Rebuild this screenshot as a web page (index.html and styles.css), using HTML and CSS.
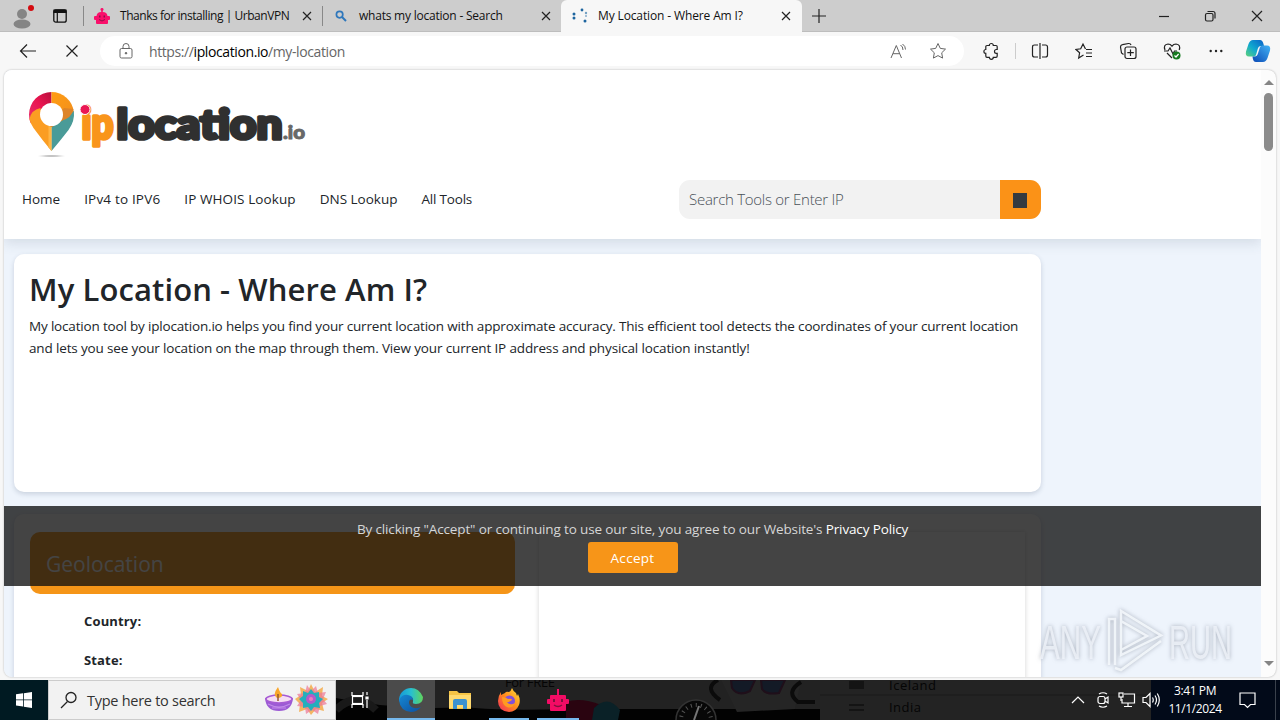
FILE: index.html
```html
<!DOCTYPE html>
<html lang="en">
<head>
  <meta charset="UTF-8">
  <title>My Location - Where Am I?</title>
  <link rel="stylesheet" href="styles.css">
</head>
<body>

  <div class="tab-strip">
    <div class="profile">
      <svg width="24" height="28" viewBox="0 0 24 28"><circle cx="12" cy="12" r="5" fill="#858585"/><ellipse cx="12" cy="22" rx="8.5" ry="4.5" fill="#858585"/><circle cx="21" cy="6" r="3" fill="#d40b10"/></svg>
    </div>
    <div class="workspaces">
      <svg width="16" height="16" viewBox="0 0 16 16"><rect x="1.8" y="1.8" width="12.4" height="12.4" rx="2" fill="none" stroke="#111" stroke-width="1.3"/><path d="M2 2h12v2.500H2zM5.3 5v9" fill="#111" stroke="#111" stroke-width="1.2"/></svg>
    </div>
    <div class="tab tab-first">
      <svg class="tab-icon" width="16" height="16" viewBox="0 0 16 16"><path d="M8 0a1.500 1.500 0 0 1 .8 2.800V4Q13 4 13.500 8H15q1 0 1 1v2q0 1-1 1h-1v3q0 1-1 1H3q-1 0-1-1v-3H1q-1 0-1-1V9q0-1 1-1h1.500Q3 4 7.200 4V2.800A1.500 1.500 0 0 1 8 0z" fill="#f9106b"/><path d="M5 7.500h1.500v2H5zM9.500 7.500H11v2H9.500z" fill="#8e1048"/><path d="M5 11.500q3 3 6 0" fill="none" stroke="#8e1048"/></svg>
      <span class="tab-title title-vpn">Thanks for installing | UrbanVPN</span>
      <svg class="close" width="10" height="10" viewBox="0 0 10 10"><path d="M1 1l8 8M9 1L1 9"/></svg>
    </div>
    <div class="tab tab-second">
      <svg class="tab-icon" width="12" height="12" viewBox="0 0 12 12"><circle cx="4.600" cy="4.600" r="3.200" fill="none" stroke="#2e77bc" stroke-width="1.700"/><path d="M7 7l4 4" stroke="#2e77bc" stroke-width="2"/></svg>
      <span class="tab-title title-search">whats my location - Search</span>
      <svg class="close" width="10" height="10" viewBox="0 0 10 10"><path d="M1 1l8 8M9 1L1 9"/></svg>
    </div>
    <div class="tab tab-active">
      <svg class="tab-icon" width="16" height="16" viewBox="0 0 16 16" fill="#1d659f"><circle cx="2" cy="6" r="1.500"/><circle cx="2" cy="10" r="1.500"/><circle cx="10" cy="2" r="1.400"/><circle cx="14" cy="5" r="1.200" opacity=".6"/><circle cx="14" cy="8" r="1" opacity=".5"/><circle cx="13" cy="13" r="1.500"/></svg>
      <span class="tab-title title-location">My Location - Where Am I?</span>
      <svg class="close" width="10" height="10" viewBox="0 0 10 10"><path d="M1 1l8 8M9 1L1 9"/></svg>
    </div>
    <svg class="new-tab" width="14" height="14" viewBox="0 0 14 14"><path d="M7 0v14M0 7h14"/></svg>
    <div class="window-buttons">
      <svg width="10" height="12" viewBox="0 0 10 12"><path d="M0 6.500h10"/></svg>
      <svg width="12" height="12" viewBox="0 0 12 12"><rect x="1.500" y="3.500" width="7.500" height="7.500" rx="1.500"/><path d="M3.500 1.500H9q2 0 2 2v5"/></svg>
      <svg width="12" height="12" viewBox="0 0 12 12"><path d="M1 1l10 10M11 1L1 11"/></svg>
    </div>
  </div>

  <div class="toolbar">
    <svg class="back" width="18" height="16" viewBox="0 0 18 16"><path d="M17 8H1.500M8 1.500L1.500 8L8 14.500"/></svg>
    <svg class="stop" width="14" height="14" viewBox="0 0 14 14"><path d="M1.500 1.500l11 11M12.500 1.500l-11 11"/></svg>
    <div class="address">
      <svg class="lock" width="14" height="16" viewBox="0 0 14 16"><rect x="1" y="5.500" width="12" height="9.500" rx="1.500"/><path d="M4 5.500V3.500a3 3 0 0 1 6 0v2"/><circle cx="7" cy="10.200" r=".8" fill="#555"/></svg>
      <span class="url">https://<b>iplocation.io</b>/my-location</span>
      <svg class="read" width="17" height="16" viewBox="0 0 17 16"><path d="M1 15L6.300 2.500L11.500 15M3 10.700h6.700M10.500 2q2.500 1.500 2.500 5M12.500 1q3 2 3 5.500"/></svg>
      <svg class="star" width="18" height="18" viewBox="0 0 18 18"><path d="M9 1.500l2.300 4.900 5.200.7-3.800 3.700.9 5.300L9 13.600l-4.600 2.500.9-5.300L1.500 7.100l5.200-.7z"/></svg>
    </div>
    <div class="toolbar-icons">
      <svg width="18" height="18" viewBox="0 0 18 18"><path d="M5 3.500h2.300a2 2 0 0 1 4 0H14q1.200 0 1.200 1.200v2.800h-.8a1.900 1.900 0 0 0 0 3.800h.8V14q0 1.300-1.200 1.300h-2.700a2 2 0 0 1-4 0H5q-1.200 0-1.200-1.300v-2.700a1.900 1.900 0 0 1 0-3.800V4.700Q3.800 3.500 5 3.500z"/></svg>
      <span class="divider"></span>
      <svg class="split" width="18" height="18" viewBox="0 0 18 18"><path d="M7 3H3.500Q1.500 3 1.500 5v8q0 2 2 2H7M11 3h3.500q2 0 2 2v8q0 2-2 2H11M9 1v16"/></svg>
      <svg class="favorites" width="18" height="18" viewBox="0 0 18 18"><path d="M10.500 7L8 2L5.700 6.800L1 7.500l3.600 3.300-.9 5.200L8.500 13M11 7.500h6M11 11h6M11 14.500h6"/></svg>
      <svg class="collections" width="18" height="18" viewBox="0 0 18 18"><path d="M4.500 12.500L2.500 11L1.500 5q0-2 2-2.300l6-1.200q2-.2 2.500 1.500"/><rect x="6" y="5" width="11" height="11.500" rx="2"/><path d="M11.500 7.500v6.500M8.300 10.700h6.500"/></svg>
      <svg class="essentials" width="18" height="18" viewBox="0 0 18 18"><path d="M2 8Q0 2.500 5 2q2.500 0 4 2.200Q10.500 2 13 2q5 .5 3.200 6M1 9h4l2-3 3 6 1.500-3H14M4 11l5 5"/><circle cx="13.500" cy="13.500" r="4" fill="#177b20" stroke="none"/><path d="M11.500 13.500l1.500 1.500 2.600-3" stroke="#fff"/></svg>
      <svg class="more" width="16" height="16" viewBox="0 0 16 16"><g fill="#222" stroke="none"><circle cx="2.700" cy="8" r="1.200"/><circle cx="8" cy="8" r="1.200"/><circle cx="13.300" cy="8" r="1.200"/></g></svg>
      <svg class="copilot" width="26" height="24" viewBox="0 0 26 24">
        <defs>
          <linearGradient id="cp1" x1="0" y1="1" x2="1" y2="0"><stop offset="0" stop-color="#5fd27a"/><stop offset=".45" stop-color="#10a9cf"/><stop offset="1" stop-color="#0a5fc9"/></linearGradient>
          <linearGradient id="cp2" x1="0" y1="1" x2="1" y2="0"><stop offset="0" stop-color="#0b49b5"/><stop offset="1" stop-color="#41b2f5"/></linearGradient>
        </defs>
        <path d="M8 1h7q2.500 0 3.500 4l.5 2h-3q-2.500 0-3.300 3L11 16q-.7 1.500-2.500 1.500H4q-4 0-3-5L3.500 5Q5 1 8 1z" fill="url(#cp1)" stroke="none"/>
        <path d="M18 23h-7q-2.500 0-3.200-3.500L7.500 17.500h2.300q2.200 0 3.200-3.200L15 8q.8-1.500 2.500-1.500H22q4 0 3 5L22.500 19Q21 23 18 23z" fill="url(#cp2)" stroke="none"/>
      </svg>
    </div>
  </div>

  <div class="viewport">
    <div class="page">
      <header class="header">
        <svg class="logo" width="282" height="70" viewBox="0 0 282 70">
          <defs>
            <linearGradient id="pinRed" x1="0" y1="1" x2="1" y2="0"><stop offset="0" stop-color="#e8306c"/><stop offset=".55" stop-color="#e91550"/><stop offset="1" stop-color="#b8103c"/></linearGradient>
            <linearGradient id="pinGold" x1="0" y1="0" x2="1" y2="1"><stop offset="0" stop-color="#ff9d13"/><stop offset=".7" stop-color="#f5921b"/><stop offset="1" stop-color="#b9733a"/></linearGradient>
            <radialGradient id="pinShade"><stop offset="0" stop-color="#999"/><stop offset="1" stop-color="#fff"/></radialGradient>
          </defs>
          <path d="M25.500 4A22.500 22.500 0 0 0 3 26.500q0 5 1.500 8.500L14 22l11.500-7z" fill="url(#pinRed)"/>
          <path d="M25.500 4A22.500 22.500 0 0 1 47.800 24L35 38l-9.500-23z" fill="url(#pinGold)"/>
          <path d="M3.500 31Q5 22 14.500 20l1 10 10 8v25Q17 53 7.500 40Q4 35 3.500 31z" fill="#fb9d22"/>
          <path d="M47.900 23Q49 33 42.500 42Q34 53 25.500 63V38l10-5z" fill="#4a9b98"/>
          <path d="M25.500 38v25l-3-3.500V38z" fill="#ffb545"/>
          <path d="M47.500 21Q46 30 35 33l-9 6-5-2 17-17z" fill="#dd8429"/>
          <circle cx="25.500" cy="26.500" r="11.500" fill="#fff"/>
          <ellipse cx="25.500" cy="68" rx="15" ry="1.200" fill="url(#pinShade)"/>
          <g class="logo-text">
            <text class="logo-ip" x="55.500" y="50.500" textLength="32" lengthAdjust="spacingAndGlyphs">ip</text>
            <text class="logo-name" x="90.500" y="50.500" textLength="166" lengthAdjust="spacingAndGlyphs">location</text>
            <text class="logo-io" x="257" y="51" textLength="22" lengthAdjust="spacingAndGlyphs">.io</text>
          </g>
          <circle cx="59" cy="21.500" r="5" fill="#ea1753" stroke="#fff"/>
        </svg>
        <div class="nav-row">
          <nav class="nav">
            <a>Home</a>
            <a class="nav-wide">IPv4 to IPV6</a>
            <a>IP WHOIS Lookup</a>
            <a>DNS Lookup</a>
            <a class="nav-last">All Tools</a>
          </nav>
          <div class="search">
            <span class="search-field">Search Tools or Enter IP</span>
            <span class="search-button"><i></i></span>
          </div>
        </div>
      </header>

      <main class="content">
        <section class="card intro">
          <h1>My Location - Where Am I?</h1>
          <p><span class="line-one">My location tool by iplocation.io helps you find your current location with approximate accuracy. This efficient tool detects the coordinates of your current location</span><br><span class="line-two">and lets you see your location on the map through them. View your current IP address and physical location instantly!</span></p>
        </section>
        <section class="card details">
          <div class="geo">
            <h2>Geolocation</h2>
            <div class="row">Country:</div>
            <div class="row">State:</div>
          </div>
          <div class="map"></div>
        </section>
      </main>

      <div class="cookie-bar">
        <p>By clicking "Accept" or continuing to use our site, you agree to our Website's <a>Privacy Policy</a></p>
        <button>Accept</button>
      </div>
    </div>
    <div class="scrollbar">
      <span class="arrow-up"></span>
      <span class="thumb"></span>
      <span class="arrow-down"></span>
    </div>
  </div>

  <svg class="watermark" width="204" height="68" viewBox="0 0 204 68">
    <g class="wm-text">
      <text x="5" y="53" textLength="61" lengthAdjust="spacingAndGlyphs">ANY</text>
      <text x="134" y="53" textLength="63" lengthAdjust="spacingAndGlyphs">RUN</text>
    </g>
    <path class="wm-mark" d="M74 59V13h6v46M86 5v44L126 29.500L86 5v10l26 15-26 14M80 62l6 2 40-29"/>
  </svg>

  <div class="taskbar">
    <svg class="backdrop" width="945" height="40" viewBox="0 0 945 40">
      <rect width="945" height="40" fill="#020202"/>
      <path d="M0 0h484v29H230Q160 31 130 27Q60 31 0 18z" fill="#222"/>
      <path d="M484 0h461v40H484z" fill="#232323"/>
      <path d="M0 30Q20 10 40 30" fill="none" stroke="#191919" stroke-width="8"/>
      <path d="M230 22q15-5 35 3l2 15h-37z" fill="#2a0410"/>
      <path d="M258 28q14-14 26 2l-2 10h-26z" fill="#0a2127"/>
      <circle cx="360" cy="40" r="20" fill="#080808" stroke="#333" stroke-width="1.500"/>
      <circle cx="360" cy="40" r="15" fill="none" stroke="#555" stroke-width="4" stroke-dasharray="1 4"/>
      <path d="M358 40l5-14" stroke="#777" stroke-width="2"/>
      <path d="M385 0h80l-6 29-58 3z" fill="#252525"/>
      <path d="M395 0h24l-5 11q-12 6-18-3zM425 0h24l-6 13q-13 2-17-4z" fill="#131a26" stroke="#1f0f1a" stroke-width="2"/>
      <path d="M382 0q-15 8 2 20M465 2q-16 10-3 20h17" fill="none" stroke="#0b0b0b" stroke-width="4"/>
      <path d="M484 15h350" stroke="#1a1a1a"/>
      <g class="ghost">
        <text x="169" y="7" textLength="50">For FREE</text>
        <text x="553" y="10" textLength="47">Iceland</text>
        <text x="553" y="32" textLength="32">India</text>
        <path d="M513 1h15v8h-15zM513 24h15v2h-15zM513 29h15v2h-15z" opacity=".5"/>
      </g>
    </svg>
    <div class="start">
      <svg width="16" height="16" viewBox="0 0 16 16" fill="#fff"><path d="M0 2.300L7 1.300V7.500H0zM7.800 1.200L16 0v7.500H7.800zM0 8.300h7v6.300l-7-1zM7.800 8.300H16V16l-8.200-1.200z"/></svg>
    </div>
    <div class="task-search">
      <svg class="magnifier" width="18" height="18" viewBox="0 0 18 18"><circle cx="11" cy="6.500" r="5"/><path d="M7.500 10.500L1 17"/></svg>
      <span>Type here to search</span>
      <svg class="diya" width="64" height="34" viewBox="0 0 64 34">
        <path d="M1 15q14-5 28 0-1 13-14 13T1 15z" fill="#9c5bd4"/>
        <ellipse cx="15" cy="16" rx="13" ry="4" fill="#f6ddf3" stroke="#a75bd4" stroke-width="1.500"/>
        <path d="M4 21q11 6 22 0M8 25h14" fill="none" stroke="#c48bea" stroke-width="1.200"/>
        <path d="M14 4q-6 8-1 11 6 0 5-4-2-1-4-7z" fill="#f9a62b"/>
        <path d="M14 11v7" stroke="#93572f" stroke-width="1.500"/>
        <g class="rangoli">
          <path d="M47 1l4 8 8-5-1 9 6 3-6 4 2 8-8-2-5 6-4-6-8 3 1-8-5-5 6-4-1-8 8 4z" fill="#f4b562"/>
          <path d="M43 2l4 6 5-5 2 7 8-1-3 7 4 5-7 2-2 8-6-4-6 4-1-7-8-1 4-6-4-6 8-1z" fill="#ed7695" opacity=".7"/>
          <path d="M47 6l3 4 5-1v5l4 2-4 4 1 5-6-1-3 4-3-4-5 1v-5l-4-4 4-3v-5l5 2z" fill="#24aebc"/>
          <circle cx="47" cy="16" r="5" fill="#b55ac9"/><circle cx="47" cy="16" r="2" fill="#ef7cbb"/>
        </g>
      </svg>
    </div>
    <div class="task-view">
      <svg width="18" height="16" viewBox="0 0 18 16" fill="none" stroke="#fff" stroke-width="1.200"><path d="M1 0v3.500h11V0M1 16v-3.500h11V16M16 0v3M16 8v8"/><rect x="1.500" y="4.500" width="10" height="7"/><path d="M15 5h2v2h-2z" fill="#fff"/></svg>
    </div>
    <div class="task edge">
      <svg width="26" height="26" viewBox="0 0 26 26">
        <defs>
          <linearGradient id="edgeTop" x1="0" y1=".5" x2="1" y2=".5"><stop offset="0" stop-color="#1598d7"/><stop offset=".5" stop-color="#28bfd1"/><stop offset="1" stop-color="#60d55c"/></linearGradient>
          <linearGradient id="edgeLow" x1="0" y1="0" x2="1" y2="1"><stop offset="0" stop-color="#1688d2"/><stop offset="1" stop-color="#0d4f9f"/></linearGradient>
        </defs>
        <path d="M1 12C2 5 7 1 13 1q8 0 12 9 0 7-7 7-4 0-3-2.500Q16 10 11 9 4 8 1 15z" fill="url(#edgeTop)"/>
        <path d="M1 13q3-6 9-5 5 1 5 5-4-2-4 3 1 6 9 5l3-1q-4 5-10 5Q2 24 1 13z" fill="url(#edgeLow)"/>
      </svg>
    </div>
    <div class="task explorer">
      <svg width="22" height="20" viewBox="0 0 22 20"><path d="M0 1h8l2 2h12v16H0z" fill="#f6c445"/><path d="M0 5h22v13H0z" fill="#ffda70"/><path d="M4 19v-8q0-2 2-2h10q2 0 2 2v8h-4v-4H8v4z" fill="#3b91cf"/></svg>
    </div>
    <div class="task firefox">
      <svg width="24" height="24" viewBox="0 0 24 24">
        <defs><linearGradient id="fire" x1="1" y1="0" x2="0" y2="1"><stop offset="0" stop-color="#ffe33c"/><stop offset=".5" stop-color="#ff8a1c"/><stop offset="1" stop-color="#f32663"/></linearGradient></defs>
        <path d="M15 0q1 3 4 5l1 3 1-2q3 6 1 11-3 7-10 7Q1 23 1 13q0-5 3-9v3l4-2q1-2 4-1 2-1 3-4z" fill="url(#fire)"/>
        <circle cx="12.500" cy="13" r="5.500" fill="#8150da"/><path d="M5 9q4 0 6 2 4-1 4 1-2 2-5 2 3 4 8 1-3 6-8 4-5-2-5-10z" fill="#ff9b21"/>
      </svg>
    </div>
    <div class="task robot">
      <svg width="24" height="24" viewBox="0 0 24 24"><path d="M11 1h2v6h6q1 0 1 1v3h2q1 0 1 1v3q0 1-1 1h-2v6q0 1-1 1H5q-1 0-1-1v-6H2q-1 0-1-1v-3q0-1 1-1h2V8q0-1 1-1h6z" fill="#f30c65"/><path d="M7 11h2v3H7zM15 11h2v3h-2z" fill="#82113c"/><path d="M8 17q4 3 8 0" fill="none" stroke="#82113c" stroke-width="1.500"/></svg>
    </div>
    <div class="tray">
      <svg width="14" height="8" viewBox="0 0 14 8"><path d="M1 7l6-6 6 6"/></svg>
      <svg class="meet" width="14" height="16" viewBox="0 0 14 16"><rect x="2" y="4.500" width="7" height="7" rx="2"/><path d="M9 7l3-2v6l-3-2M3 2q4-2.500 8 0M3 14q4 2.500 8 0"/></svg>
      <svg class="network" width="18" height="16" viewBox="0 0 18 16"><path d="M6 2h10.500v9H4V7M10 11v3M6 14.500h8"/><rect x="1" y="1" width="4" height="4"/><path d="M3 5v4"/></svg>
      <svg class="volume" width="18" height="16" viewBox="0 0 18 16"><path d="M1 5.500h3l4-4v13l-4-4H1zM10.500 5.500q1.500 2.500 0 5M13 3.500q3 4.500 0 9M15.300 1.500q4 6.500 0 13"/></svg>
    </div>
    <div class="clock-area">
      <div class="clock"><span>3:41 PM</span><span>11/1/2024</span></div>
      <svg class="notice" width="18" height="17" viewBox="0 0 18 17"><path d="M1 1h15v11.500h-4.500L8.500 15.500 5.500 12.500H1z"/></svg>
    </div>
  </div>

</body>
</html>
```
FILE: styles.css
```css
* {
  box-sizing: border-box;
  margin: 0;
  padding: 0;
}

body {
  width: 1280px;
  height: 720px;
  overflow: hidden;
  position: relative;
  display: flex;
  flex-direction: column;
  background: #f7f7f7;
  font-family: "Open Sans", "Noto Sans", sans-serif;
  color: #212529;
}

svg {
  display: block;
  flex: none;
}

span, a, h1, h2, p {
  white-space: nowrap;
}

/* browser tabs */
.tab-strip {
  height: 32px;
  flex: none;
  display: flex;
  align-items: center;
  background: #cdcdcd;
  border-bottom: 1px solid #bdbdbd;
}

.profile {
  width: 48px;
  padding-left: 10px;
}

.workspaces {
  width: 35px;
  padding-left: 4px;
}

.tab {
  height: 31px;
  display: flex;
  align-items: center;
  position: relative;
  font-size: 12px;
  color: #111;
}

.tab-first {
  width: 239px;
  padding-left: 11px;
}

.tab-second {
  width: 239px;
  padding-left: 13px;
}

.tab-first::before,
.tab-second::before {
  content: "";
  position: absolute;
  left: 0;
  top: 6px;
  height: 20px;
  border-left: 1px solid #888;
}

.tab-active {
  width: 241px;
  height: 32px;
  padding-left: 11px;
  background: #f7f7f7;
  border-radius: 6px 6px 0 0;
  margin-bottom: -1px;
}

.tab-title {
  margin-left: 10px;
}

.tab-second .tab-title {
  margin-left: 12px;
}

.tab .close {
  position: absolute;
  right: 10px;
}

.tab-active .close {
  right: 11px;
}

.close, .new-tab, .window-buttons svg {
  fill: none;
  stroke: #222;
  stroke-width: 1.2;
}

.title-vpn { letter-spacing: -0.45px; }
.title-search { letter-spacing: -0.22px; }
.title-location { letter-spacing: -0.13px; }

.tab-active .tab-title {
  margin-bottom: 1px;
}

.new-tab {
  margin-left: 10px;
}

.window-buttons {
  margin-left: auto;
  margin-right: 17px;
  display: flex;
  gap: 35px;
}

/* address row */
.toolbar {
  height: 38px;
  flex: none;
  display: flex;
  align-items: center;
  padding-left: 19px;
}

.toolbar svg {
  fill: none;
  stroke: #222;
  stroke-width: 1.2;
}

.stop {
  margin-left: 28px;
}

.address {
  width: 864px;
  height: 30px;
  margin-left: 21px;
  padding: 0 17px 0 19px;
  border-radius: 15px;
  background: #fff;
  display: flex;
  align-items: center;
}

.toolbar .address svg {
  stroke: #666;
  stroke-width: 1;
}

.url {
  margin-left: 16px;
  font-size: 14px;
  letter-spacing: -0.4px;
  color: #666;
}

.url b {
  color: #000;
  font-weight: 400;
}

.read {
  margin-left: auto;
}

.star {
  margin-left: 22px;
}

.toolbar-icons {
  flex: 1;
  margin-left: 18px;
  display: flex;
  align-items: center;
}

.divider {
  height: 16px;
  margin-left: 15px;
  border-left: 1px solid #ccc;
}

.split { margin-left: 15px; }
.favorites { margin-left: 26px; }
.collections { margin-left: 26px; }
.essentials { margin-left: 26px; }
.more { margin-left: 27px; }
.copilot { margin-left: 21px; }

/* web page */
.viewport {
  width: 1272px;
  height: 607px;
  flex: none;
  margin-left: 4px;
  display: flex;
  overflow: hidden;
  border-radius: 8px;
  background: #fcfcfc;
  box-shadow: 0 0 2px #aaa;
}

.page {
  width: 1257px;
  position: relative;
  overflow: hidden;
  background: #eef4fc;
}

.header {
  height: 169px;
  padding: 18px 0 0 22px;
  position: relative;
  background: #fff;
  box-shadow: 0 4px 12px rgba(60, 80, 100, 0.15);
}

.logo-text {
  font-family: Lato, sans-serif;
  font-weight: 900;
  font-size: 41px;
  stroke-width: 3.6;
  stroke-linejoin: round;
}

.logo-ip { fill: #f9951b; stroke: #f9951b; font-size: 44px; }
.logo-name { fill: #303030; stroke: #303030; }
.logo-io { font-size: 19px; fill: #686868; stroke: #686868; stroke-width: 1; }

.nav-row {
  display: flex;
  align-items: center;
  margin: 22px 0 0 -4px;
}

.nav {
  width: 657px;
  display: flex;
  gap: 24px;
  padding-bottom: 2px;
  font-size: 13.5px;
  letter-spacing: 0;
}

.nav .nav-wide { letter-spacing: 0.18px; }
.nav a:nth-child(3) { letter-spacing: 0.1px; }
.nav .nav-last { letter-spacing: -0.2px; }

.search {
  width: 362px;
  height: 39px;
  display: flex;
  overflow: hidden;
  border-radius: 11px;
  background: #f2f2f2;
}

.search-field {
  flex: 1;
  padding-left: 10px;
  line-height: 39px;
  font-size: 15px;
  font-weight: 300;
  letter-spacing: -0.27px;
  color: #495057;
}

.search-button {
  width: 41px;
  background: #fb9217;
  display: flex;
  align-items: center;
  justify-content: center;
}

.search-button i {
  width: 14px;
  height: 15px;
  margin: 2px 1px 0 0;
  background: #343a40;
}

.content {
  padding: 15px 0 0 10px;
}

.card {
  width: 1027px;
  background: #fff;
  border-radius: 10px;
  box-shadow: 0 2px 5px rgba(50, 70, 100, 0.2);
}

.intro {
  height: 238px;
  padding: 13px 15px;
}

h1 {
  font-size: 31px;
  line-height: 44px;
  font-weight: 600;
  letter-spacing: 0.1px;
}

.intro p {
  margin-top: 4px;
  font-size: 13.5px;
  line-height: 22px;
}

.line-one { letter-spacing: -0.177px; }
.line-two { letter-spacing: -0.145px; }

.details {
  height: 300px;
  margin-top: 22px;
  padding: 18px 16px;
  display: flex;
  gap: 24px;
}

.geo {
  width: 485px;
}

.map {
  width: 486px;
  box-shadow: 0 0 5px rgba(0, 0, 0, 0.17);
}

h2 {
  height: 62px;
  margin-bottom: 8px;
  padding-left: 16px;
  border-radius: 10px;
  background: #f59518;
  color: #fff;
  font-size: 21px;
  line-height: 65px;
  font-weight: 400;
}

.row {
  height: 39px;
  padding-left: 54px;
  font-size: 13px;
  font-weight: 700;
  line-height: 39px;
  letter-spacing: 0.15px;
}

.cookie-bar {
  position: absolute;
  left: 0;
  bottom: 91px;
  width: 1257px;
  height: 80px;
  padding-top: 12px;
  display: flex;
  flex-direction: column;
  align-items: center;
  background: rgba(15, 15, 15, 0.78);
  color: #d6d6d6;
  font-size: 13.5px;
}

.cookie-bar p {
  line-height: 22px;
  letter-spacing: -0.14px;
}

.cookie-bar a {
  color: #fff;
}

.cookie-bar button {
  width: 90px;
  height: 31px;
  margin-top: 2px;
  border: none;
  border-radius: 3px;
  background: #f79518;
  color: #fff;
  font: inherit;
  letter-spacing: 0.3px;
}

.scrollbar {
  width: 15px;
  display: flex;
  flex-direction: column;
  align-items: center;
  padding: 10px 0 11px;
}

.arrow-up, .arrow-down {
  border-left: 5px solid transparent;
  border-right: 5px solid transparent;
}

.arrow-up { border-bottom: 5px solid #858585; }
.arrow-down { border-top: 5px solid #858585; margin-top: auto; }

.thumb {
  width: 9px;
  height: 58px;
  margin-top: 8px;
  border-radius: 5px;
  background: #8b8b8b;
}

.watermark {
  position: absolute;
  left: 1035px;
  top: 606px;
  filter: drop-shadow(0 0 2px rgba(70, 80, 100, 0.5));
}

.wm-text {
  font-family: "Liberation Sans", sans-serif;
  font-size: 49px;
  fill: rgba(240, 244, 250, 0.8);
}

.wm-mark {
  fill: none;
  stroke: rgba(246, 249, 253, 0.85);
  stroke-width: 2.5;
}

/* taskbar */
.taskbar {
  height: 40px;
  margin-top: 3px;
  flex: none;
  position: relative;
  display: flex;
  background: #222;
}

.taskbar > div {
  position: relative;
  display: flex;
  align-items: center;
  justify-content: center;
}

.backdrop {
  position: absolute;
  left: 336px;
  top: 0;
}

.ghost {
  font-size: 13px;
  fill: #050505;
}

.start {
  width: 48px;
  background: #001a22;
}

.taskbar .task-search {
  width: 288px;
  padding-left: 11px;
  justify-content: flex-start;
  background: #f2f2f2;
  border: 1px solid #ccc;
  font-size: 14.5px;
  color: #333;
}

.magnifier {
  fill: none;
  stroke: #222;
  stroke-width: 1.3;
}

.task-search span {
  margin-left: 9px;
  letter-spacing: -0.27px;
}

.diya {
  margin-left: auto;
  margin-right: 7px;
}

.taskbar .task-view { width: 51px; padding-right: 3px; }
.edge { width: 48px; background: #4b4b4b; }
.explorer { width: 50px; }
.firefox { width: 48px; }
.robot { width: 50px; }

.edge::after, .firefox::after, .robot::after {
  content: "";
  position: absolute;
  left: 4px;
  right: 4px;
  bottom: 0;
  height: 2px;
  background: #76b9ed;
}

.edge::after {
  left: 0;
  right: 0;
}

.taskbar .tray {
  margin-left: auto;
  width: 80px;
  gap: 9px;
  justify-content: flex-start;
  z-index: 1;
}

.tray svg, .notice {
  fill: none;
  stroke: #fff;
  stroke-width: 1.2;
}

.tray .meet { margin-left: 2px; }
.tray .network { margin-left: -1px; }
.tray .volume { margin-left: -3px; }

.taskbar .clock-area {
  width: 129px;
  padding-left: 16px;
  justify-content: flex-start;
  background: #020a19;
}

.clock-area::after {
  content: "";
  position: absolute;
  right: 4px;
  top: 0;
  height: 40px;
  border-left: 1px solid #3a414c;
}

.clock {
  width: 56px;
  display: flex;
  flex-direction: column;
  align-items: center;
  font-size: 12px;
  line-height: 18px;
  letter-spacing: -0.4px;
  color: #fff;
}

.notice {
  margin-left: 16px;
}
```
